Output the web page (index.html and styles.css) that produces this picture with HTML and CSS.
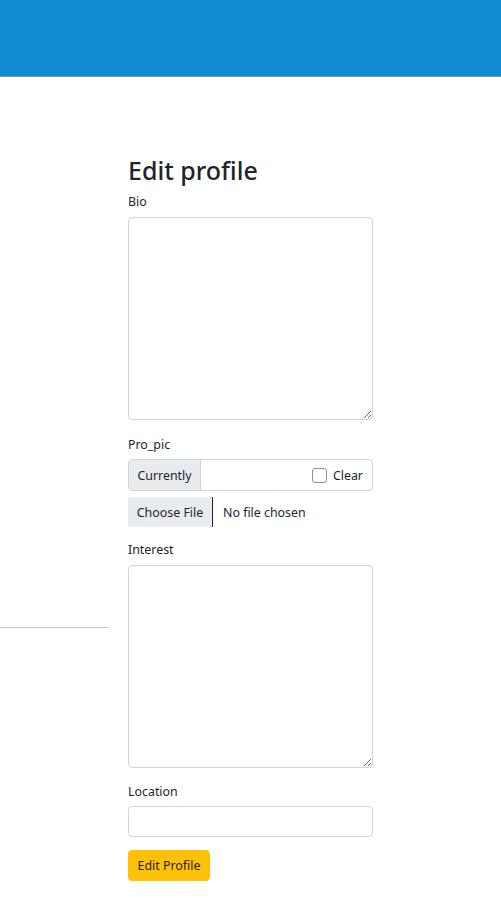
FILE: index.html
```html
<!DOCTYPE html>
<html>
<head>
<meta charset="utf-8">
<link rel="stylesheet" href="styles.css">
</head>
<body>
<header class="topbar"></header>
<div class="layout">
  <aside class="side"><div class="side-rule"></div></aside>
  <main class="main">
    <h3 class="title">Edit profile</h3>
    <form class="form">
      <label class="label">Bio</label>
      <textarea class="area"></textarea>
      <label class="label gap tight">Pro_pic</label>
      <div class="group">
        <span class="addon">Currently</span>
        <span class="group-body"><span class="check"></span><span class="clear">Clear</span></span>
      </div>
      <div class="file">
        <span class="file-btn">Choose File</span>
        <span class="file-text">No file chosen</span>
      </div>
      <label class="label gap2">Interest</label>
      <textarea class="area"></textarea>
      <label class="label gap3 tight">Location</label>
      <input class="input" type="text">
      <button type="button" class="btn">Edit Profile</button>
    </form>
  </main>
</div>
</body>
</html>
```
FILE: styles.css
```css
* { box-sizing: border-box; }
body {
  margin: 0;
  background: #fff;
  font-family: "Noto Sans", "Open Sans", sans-serif;
  font-size: 12.4px;
  color: #212529;
}
.topbar {
  height: 77px;
  background: #118bd1;
  border-bottom: 1px solid #8a9aa8;
}
.layout {
  display: flex;
  gap: 19px;
}
.side {
  width: 109px;
  flex: none;
}
.side-rule {
  margin-top: 550px;
  height: 1px;
  background: #c8c8c8;
}
.main {
  width: 245px;
  padding-top: 78px;
}
.title {
  margin: 0 0 6px;
  font-size: 25px;
  font-weight: 500;
  line-height: 31px;
  color: #212529;
}
.form {
  display: flex;
  flex-direction: column;
}
.label {
  display: block;
  line-height: 18px;
  padding-top: 1px;
  margin-bottom: 6px;
}
.gap { margin-top: 15px; }
.gap2 { margin-top: 13px; }
.gap3 { margin-top: 14px; }
.tight { margin-bottom: 5px; }
.area {
  display: block;
  width: 245px;
  height: 203px;
  border: 1px solid #ced4da;
  border-radius: 4px;
  resize: vertical;
  margin: 0;
  font: inherit;
}
.group {
  display: flex;
  height: 32px;
  border: 1px solid #ced4da;
  border-radius: 4px;
  overflow: hidden;
}
.addon {
  width: 72px;
  background: #e9ecef;
  border-right: 1px solid #ced4da;
  display: flex;
  align-items: center;
  justify-content: center;
}
.group-body {
  flex: 1;
  display: flex;
  align-items: center;
  justify-content: flex-end;
  padding-right: 9px;
}
.check {
  width: 15px;
  height: 15px;
  border: 1px solid #8f8f8f;
  border-radius: 3px;
  margin-right: 6px;
}
.file {
  display: flex;
  align-items: center;
  height: 30px;
  margin-top: 6px;
}
.file-btn {
  height: 30px;
  width: 85px;
  background: #e9ecef;
  border-right: 1px solid #212529;
  display: flex;
  align-items: center;
  justify-content: center;
}
.file-text {
  margin-left: 10px;
}
.input {
  display: block;
  width: 245px;
  height: 31px;
  border: 1px solid #ced4da;
  border-radius: 4px;
  margin: 0;
  font: inherit;
}
.btn {
  align-self: flex-start;
  margin-top: 13px;
  height: 31px;
  width: 82px;
  background: #ffc107;
  border: 1px solid #ffc107;
  border-radius: 4px;
  font: inherit;
  color: #212529;
  padding: 0;
}
```
